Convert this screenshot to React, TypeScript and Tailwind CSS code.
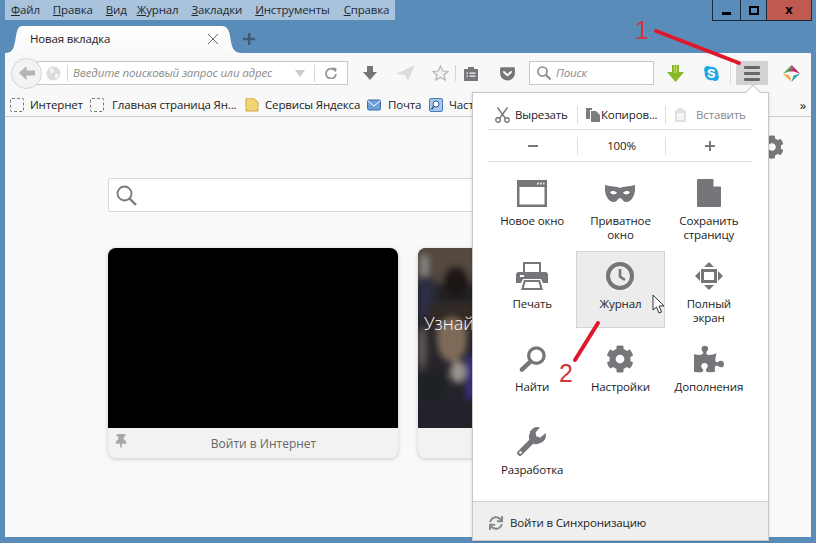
import React from "react";
import { FaPuzzlePiece, FaCog, FaThumbtack, FaGetPocket, FaSkype, FaSync } from "react-icons/fa";

const U = ({ a, b, m }: { a: string; b: string; m: string }) => (
  <span className={"whitespace-nowrap " + m}><span className="underline">{a}</span>{b}</span>
);

const G = "#75767a";

const Dashed = () => <div className="w-[14px] h-[14px] border border-dashed border-[#777] rounded-[2px] shrink-0" />;

function Cell({ icon, label, active }: { icon: React.ReactNode; label: React.ReactNode; active?: boolean }) {
  return (
    <div className={"h-[77px] flex flex-col items-center pt-[8px] border " + (active ? "bg-[#ececec] border-[#d4d4d4]" : "border-transparent")}>
      <div className="h-[32px] w-full flex items-center justify-center shrink-0">{icon}</div>
      <div className="mt-[5px] text-center leading-[14px] text-[#222]">{label}</div>
    </div>
  );
}

export default function App() {
  return (
    <div className="relative w-[816px] h-[543px] overflow-hidden bg-[#5a8cba] flex flex-col font-['Open_Sans','Noto_Sans',sans-serif] text-[11.5px] tracking-[-0.15px] text-[#222]">
      {/* title row */}
      <div className="flex justify-between h-[26px] pl-[5px] pr-[4px] shrink-0">
        <div className="w-[390px] h-[20px] bg-[#a9c3dc] pl-[6px] flex items-center text-[#1f2a33]">
          <U m="mr-[13px]" a="Ф" b="айл" /><U m="mr-[13px]" a="П" b="равка" /><U m="mr-[10px]" a="В" b="ид" /><U m="mr-[13px]" a="Ж" b="урнал" /><U m="mr-[13px]" a="З" b="акладки" /><U m="mr-[14px]" a="И" b="нструменты" /><U m="" a="С" b="правка" />
        </div>
        <div className="flex h-[21px] border border-t-0 border-[#1d2b38] w-[100px]">
          <div className="w-[28px] flex items-center justify-center border-r border-[#1d2b38] pt-[6px]"><div className="w-[9px] h-[3px] bg-black" /></div>
          <div className="w-[26px] flex items-center justify-center border-r border-[#1d2b38]"><div className="w-[10px] h-[9px] border-2 border-black" /></div>
          <div className="flex-1 bg-[#c05a50] flex items-center justify-center font-bold text-[13px] text-black">x</div>
        </div>
      </div>

      {/* tab row */}
      <div className="flex items-end h-[27px] pl-[5px] shrink-0">
        <svg width="17" height="27" viewBox="0 0 17 27" className="shrink-0">
          <path d="M0 27 C8 27 9 22 11 10 C12 3 14 0 17 0 L17 27 Z" fill="#fbfbfb" />
        </svg>
        <div className="w-[200px] h-[27px] bg-gradient-to-b from-white to-[#f8f8f8] flex items-center justify-between pl-[8px] pr-[3px] pb-[2px]">
          <span className="text-[#222]">Новая вкладка</span>
          <svg width="12" height="12" viewBox="0 0 12 12" stroke="#666" strokeWidth="1"><path d="M1 1 L11 11 M11 1 L1 11" /></svg>
        </div>
        <svg width="20" height="27" viewBox="0 0 20 27" className="shrink-0">
          <path d="M20 27 C11 27 10 22 8 10 C7 3 4 0 0 0 L0 27 Z" fill="#fbfbfb" />
        </svg>
        <svg width="14" height="14" viewBox="0 0 14 14" className="mb-[7px]"><path d="M6 1h2.400v4.800H13v2.400H8.400V13H6V8.200H1V5.800h5z" fill="#3f5b74" /></svg>
      </div>

      {/* browser body */}
      <div className="mx-[5px] w-[806px] flex-1 flex flex-col bg-[#f9f9f9] mb-[6px] min-h-0">
        {/* toolbar */}
        <div className="h-[39px] shrink-0 flex items-center bg-[#f8f8f8] pt-px">
          <div className="flex items-center ml-[6px]">
            <div className="w-[31px] h-[31px] rounded-full bg-[#f3f3f3] border border-[#d4d4d4] flex items-center justify-center z-10 shrink-0">
              <svg width="16" height="14" viewBox="0 0 16 14"><path d="M7.500 0 L0 7 L7.500 14 V9.500 H16 V4.500 H7.500Z" fill="#b3b3b3" /></svg>
            </div>
            <div className="w-[311px] h-[24px] -ml-[5px] bg-white border border-[#c8c8c8] flex items-center">
              <svg width="15" height="15" viewBox="0 0 15 15" className="ml-[8px] shrink-0"><circle cx="7.500" cy="7.500" r="7" fill="#dcdcdc" /><path d="M3 3 L7 2 L8 6 L5 8 Z M9 8 L13 8 L11 13 L9 12Z" fill="#f5f5f5" /></svg>
              <div className="w-px h-[17px] bg-[#d8d8d8] ml-[6px]" />
              <span className="ml-[5px] italic text-[#8b8b8b] whitespace-nowrap w-[208px]">Введите поисковый запрос или адрес</span>
              <svg width="10" height="7" viewBox="0 0 10 7" className="ml-[14px]"><path d="M0 0H10L5 7Z" fill="#c9c9c9" /></svg>
              <div className="w-px h-[17px] bg-[#d8d8d8] ml-[9px]" />
              <svg width="12" height="12" viewBox="0 0 12 12" className="ml-[10px]"><path d="M10 3.500 A5 5 0 1 0 11 7" fill="none" stroke="#969696" strokeWidth="1.800" /><path d="M7 0.500 L11.500 1 L11 5.500Z" fill="#969696" /></svg>
            </div>
          </div>
          <svg width="14" height="14" viewBox="0 0 14 14" className="ml-[15px]"><path d="M4 0H10V6H14L7 14L0 6H4Z" fill={G} /></svg>
          <svg width="19" height="16" viewBox="0 0 19 16" className="ml-[19px]"><path d="M0 9 L19 0 L12 16 L9 10Z" fill="#dcdcdc" /></svg>
          <svg width="17" height="16" viewBox="0 0 17 16" className="ml-[17px]"><path d="M8.500 1 L10.700 6 L16 6.500 L12 10 L13.200 15 L8.500 12.400 L3.800 15 L5 10 L1 6.500 L6.300 6Z" fill="#f2f2f2" stroke="#b5b5b5" strokeWidth="1.200" /></svg>
          <div className="w-px h-[16px] bg-[#d4d4d4] ml-[6px]" />
          <svg width="14" height="15" viewBox="0 0 14 15" className="ml-[8px]"><path d="M0 3H4V1H10V3H14V15H0Z" fill={G} /><path d="M2.500 6.500h1.500v1.300H2.500zM5.500 6.500h6v1.300h-6zM2.500 9.500h1.500v1.300H2.500zM5.500 9.500h6v1.300h-6z" fill="#f8f8f8" /></svg>
          <FaGetPocket size={17} color={G} className="ml-[21px]" />
          <div className="ml-[13px] w-[125px] h-[24px] bg-white border border-[#c8c8c8] flex items-center pl-[7px]">
            <svg width="14" height="14" viewBox="0 0 14 14" fill="none" stroke="#888" strokeWidth="1.600"><circle cx="5.500" cy="5.500" r="4.500" /><path d="M9 9 L13.500 13.500" strokeWidth="2" /></svg>
            <span className="ml-[5px] italic text-[#8b8b8b]">Поиск</span>
          </div>
          <svg width="17" height="17" viewBox="0 0 17 17" className="ml-[13px]"><path d="M5 0H12V7H17L8.500 17L0 7H5Z" fill="#86b825" /><path d="M7 0H8V8H7ZM9 0H10V8H9Z" fill="#c5e070" /></svg>
          <FaSkype size={17} color="#1fa8e4" className="ml-[19px]" />
          <div className="w-px h-[24px] bg-[#dcdcdc] ml-[10px]" />
          <div className="ml-[5px] w-[32px] h-[24px] bg-[#d2d2d2] flex flex-col items-center justify-center gap-[3px]">
            <div className="w-[16px] h-[3px] bg-[#666a6e] rounded-[1px]" />
            <div className="w-[16px] h-[3px] bg-[#666a6e] rounded-[1px]" />
            <div className="w-[16px] h-[3px] bg-[#666a6e] rounded-[1px]" />
          </div>
          <svg width="17" height="17" viewBox="0 0 17 17" className="ml-[15px]">
            <path d="M8.500 0 L0 8.500 L6.500 6.500Z" fill="#5aa85a" />
            <path d="M8.500 0 L17 8.500 L10.500 6.500Z" fill="#b8285c" />
            <path d="M8.500 0 L6.500 6.500 L8.500 6.500Z" fill="#7a2f4a" />
            <path d="M8.500 0 L10.500 6.500 L8.500 6.500Z" fill="#b8285c" />
            <path d="M0 8.500 L8.500 17 L6.500 10.500Z" fill="#f4a62a" />
            <path d="M17 8.500 L8.500 17 L10.500 10.500Z" fill="#2fa3a8" />
          </svg>
        </div>
        {/* bookmarks */}
        <div className="h-[25px] shrink-0 flex items-center bg-[#f8f8f8] border-b border-[#d0d0d0] pl-[5px] pr-[4px] text-[#222] whitespace-nowrap pt-[2px]">
          <Dashed />
          <span className="ml-[6px] w-[60px]">Интернет</span>
          <Dashed />
          <span className="ml-[8px] w-[133px]">Главная страница Ян...</span>
          <svg width="14" height="14" viewBox="0 0 14 14"><path d="M1 0H8L13 4V13H1Z" fill="#f2d477" stroke="#c9a93f" /></svg>
          <span className="ml-[6px] w-[102px]">Сервисы Яндекса</span>
          <svg width="14" height="14" viewBox="0 0 14 14"><rect x="0.500" y="2" width="13" height="10" rx="1.500" fill="#6e9fd8" stroke="#3a6ea8" /><path d="M1 3 L7 8 L13 3" fill="none" stroke="#fff" /></svg>
          <span className="ml-[7px] w-[41px]">Почта</span>
          <svg width="14" height="14" viewBox="0 0 14 14"><rect x="0.500" y="0.500" width="13" height="13" rx="1.500" fill="#a9c8ea" stroke="#4a7db8" /><circle cx="7" cy="6" r="3" fill="#fff" stroke="#2d5f9a" /><path d="M5 8 L2.500 11.500" stroke="#2d5f9a" strokeWidth="1.500" /></svg>
          <span className="ml-[6px]">Часто читаемое</span>
          <span className="ml-auto text-[13px] leading-none pr-[1px]">»</span>
        </div>
        {/* new tab page */}
        <div className="flex-1 min-h-0 overflow-hidden pl-[103px] pt-[61px] flex flex-col">
          <div className="w-[560px] h-[34px] bg-white border border-[#d8d8d8] rounded-[2px] flex items-center pl-[7px] shrink-0">
            <svg width="21" height="21" viewBox="0 0 21 21" fill="none" stroke="#7a7a7a" strokeWidth="1.800"><circle cx="8.500" cy="8.500" r="7" /><path d="M13.500 13.500 L20 20" strokeWidth="2.400" /></svg>
          </div>
          <div className="flex gap-[20px] mt-[36px]">
            <div className="w-[290px] h-[210px] rounded-[8px] bg-[#f2f2f2] shadow-[0_1px_4px_rgba(0,0,0,0.2)] overflow-hidden flex flex-col shrink-0">
              <div className="h-[180px] bg-black shrink-0" />
              <div className="flex-1 flex items-center justify-center relative text-[12px] tracking-normal text-[#666] pl-[21px] pt-[1px]">
                <FaThumbtack size={14} color="#a8a8a8" className="absolute left-[6px] top-[6px]" />
                Войти в Интернет
              </div>
            </div>
            <div className="w-[290px] h-[210px] rounded-[8px] bg-[#f2f2f2] shadow-[0_1px_4px_rgba(0,0,0,0.2)] overflow-hidden flex flex-col shrink-0">
              <div className="h-[180px] bg-[#26242a] shrink-0 relative overflow-hidden">
                <svg width="60" height="180" viewBox="0 0 60 180" className="absolute left-0 top-0">
                  <defs><filter id="bl"><feGaussianBlur stdDeviation="3" /></filter></defs>
                  <g filter="url(#bl)">
                    <rect x="-5" y="-5" width="70" height="40" fill="#544840" />
                    <rect x="3" y="8" width="7" height="22" fill="#8a8682" />
                    <rect x="0" y="28" width="16" height="40" fill="#2c2e42" />
                    <ellipse cx="38" cy="35" rx="13" ry="17" fill="#1f1816" />
                    <rect x="10" y="55" width="50" height="30" fill="#332a27" />
                    <ellipse cx="34" cy="92" rx="15" ry="22" fill="#7f6a58" />
                    <ellipse cx="4" cy="100" rx="5" ry="22" fill="#5c5654" />
                    <rect x="0" y="125" width="28" height="50" fill="#1f2028" />
                    <rect x="48" y="108" width="14" height="42" fill="#3a2f80" />
                    <ellipse cx="40" cy="124" rx="8" ry="11" fill="#9a948c" />
                    <rect x="-5" y="152" width="70" height="36" fill="#20222a" />
                  </g>
                </svg>
                <span className="absolute left-[6px] top-[62px] text-[18px] tracking-normal text-white font-light">Узнайте</span>
              </div>
            </div>
          </div>
        </div>
      </div>

      {/* gear behind panel */}
      <FaCog size={24} color="#777" className="absolute left-[760px] top-[135px]" />

      {/* hamburger panel */}
      <div className="absolute left-[472px] top-[92px] w-[297px] h-[449px] bg-white border border-[#c8c8c8] flex flex-col shadow-[0_1px_3px_rgba(0,0,0,0.15)]">
        <div className="absolute -top-[6px] left-[274px] w-[12px] h-[12px] bg-white border-l border-t border-[#c8c8c8] rotate-45" />
        <div className="mx-[15px] mt-[7px] h-[30px] flex items-center border-b border-[#e2e2e2] relative">
          <div className="w-[89px] flex items-center pl-[7px] gap-[5px]">
            <svg width="15" height="16" viewBox="0 0 15 16" fill="none" stroke="#777" strokeWidth="1.400">
              <path d="M12.500 0.500 L4.500 11.500 M2.500 0.500 L10.500 11.500" />
              <circle cx="3" cy="13" r="2.200" /><circle cx="12" cy="13" r="2.200" />
            </svg>
            <span>Вырезать</span>
          </div>
          <div className="w-px h-[18px] bg-[#ddd]" />
          <div className="w-[87px] flex items-center pl-[8px] gap-[1px] whitespace-nowrap">
            <svg width="14" height="14" viewBox="0 0 14 14" fill="#7d7d7d" className="shrink-0"><path d="M0 0H6V2H4V11H0Z" /><path d="M5 3H10L14 7V14H5Z" /></svg>
            <span>Копиров...</span>
          </div>
          <div className="w-px h-[18px] bg-[#ddd]" />
          <div className="flex-1 flex items-center pl-[9px] gap-[10px] text-[#888]">
            <svg width="11" height="14" viewBox="0 0 11 14" fill="#e0e0e0"><path d="M0 2H3V0H8V2H11V14H0Z" /><path d="M2 5H9V12H2Z" fill="#f6f6f6" /></svg>
            <span>Вставить</span>
          </div>
        </div>
        <div className="mx-[15px] h-[32px] flex items-center border-b border-[#e2e2e2]">
          <div className="w-[89px] flex justify-center"><div className="w-[10px] h-[2px] bg-[#777]" /></div>
          <div className="w-px h-[18px] bg-[#ddd]" />
          <div className="w-[87px] text-center">100%</div>
          <div className="w-px h-[18px] bg-[#ddd]" />
          <div className="flex-1 flex justify-center">
            <svg width="10" height="10" viewBox="0 0 10 10"><path d="M4 0h2v4h4v2H6v4H4V6H0V4h4z" fill="#777" /></svg>
          </div>
        </div>
        <div className="mx-[15px] mt-[6px] grid grid-cols-3 gap-y-[6px] flex-1 content-start">
          <Cell label="Новое окно" icon={
            <svg width="30" height="27" viewBox="0 0 30 27"><path fillRule="evenodd" d="M0 0H30V27H0ZM2.500 7V24.500H27.500V7Z" fill={G} /><path d="M20 2.500h2v2h-2zM23 2.500h2v2h-2zM26 2.500h1.500v2h-1.500z" fill="#ddd" /></svg>
          } />
          <Cell label={<>Приватное<br />окно</>} icon={
            <svg width="30" height="20" viewBox="0 0 30 20"><path fillRule="evenodd" d="M0 2 C6 4 12 3 15 5 C18 3 24 4 30 2 C31 11 27 19 21 19 C18 19 17 15 15 15 C13 15 12 19 9 19 C3 19 -1 11 0 2Z M5 9.500 C7 7 11 8 12 10 C10 12 7 12 5 9.500Z M18 10 C19 8 23 7 25 9.500 C23 12 20 12 18 10Z" fill={G} /></svg>
          } />
          <Cell label={<>Сохранить<br />страницу</>} icon={
            <svg width="24" height="28" viewBox="0 0 24 28"><path d="M1 0H16L24 8V27a1 1 0 0 1-1 1H1a1 1 0 0 1-1-1V1a1 1 0 0 1 1-1Z" fill={G} /><path d="M16.500 0 L24 7.500 H16.500Z" fill="#fff" /></svg>
          } />
          <Cell label="Печать" icon={
            <svg width="32" height="28" viewBox="0 0 32 28"><path fillRule="evenodd" d="M7 0H25V10H23V2H9V10H7Z" fill={G} /><path d="M3 10H29A3 3 0 0 1 32 13V21H27L25 17H7L5 21H0V13A3 3 0 0 1 3 10Z" fill={G} /><path d="M4 13h4v2H4z" fill="#fff" /><path fillRule="evenodd" d="M8 18H24L27 28H5ZM9.500 20L7.800 26H24.200L22.500 20Z" fill={G} /></svg>
          } />
          <Cell active label="Журнал" icon={
            <svg width="28" height="28" viewBox="0 0 28 28" fill="none" stroke={G}><circle cx="14" cy="14" r="12" strokeWidth="4" /><path d="M14 7V14.500L19 18" strokeWidth="2.600" /></svg>
          } />
          <Cell label={<>Полный<br />экран</>} icon={
            <svg width="28" height="28" viewBox="0 0 28 28" fill={G}><path d="M14 0L19 5H9ZM14 28L9 23H19ZM0 14L5 9V19ZM28 14L23 19V9Z" /><path fillRule="evenodd" d="M6 7H22V21H6ZM9 10V18H19V10Z" /></svg>
          } />
          <Cell label="Найти" icon={
            <svg width="27" height="28" viewBox="0 0 28 28" fill="none" stroke={G}><circle cx="18" cy="10.500" r="8" strokeWidth="3.400" /><path d="M11.500 17 L3 25" strokeWidth="4.600" strokeLinecap="round" /></svg>
          } />
          <Cell label="Настройки" icon={<FaCog size={28} color={G} />} />
          <Cell label="Дополнения" icon={<FaPuzzlePiece size={30} color={G} />} />
          <Cell label="Разработка" icon={
            <svg width="30" height="30" viewBox="0 0 30 30" className="-mt-[2px]">
              <path d="M3 27 L17 13" stroke={G} strokeWidth="5.500" strokeLinecap="round" />
              <path d="M17 18 A7.500 7.500 0 0 1 12.500 8 A8 8 0 0 1 23 1.500 L18.500 6.500 L19.500 10.500 L23.500 11.500 L28.500 7 A8 8 0 0 1 22 17.500 A7.500 7.500 0 0 1 17 18Z" fill={G} />
              <circle cx="3.500" cy="26.500" r="1.300" fill="#fff" />
            </svg>
          } />
        </div>
        <div className="h-[39px] bg-[#efefef] border-t border-[#d0d0d0] flex items-center pl-[16px] pt-[3px] shrink-0">
          <FaSync size={14} color="#888" />
          <span className="ml-[7px]">Войти в Синхронизацию</span>
        </div>
      </div>

      {/* cursor */}
      <svg width="14" height="21" viewBox="0 0 14 21" className="absolute left-[652px] top-[294px]"><path d="M1 1 L1 16 L4.500 13 L7 19 L9.500 18 L7 12 L12 12Z" fill="#fff" stroke="#333" /></svg>

      {/* annotations */}
      <svg width="816" height="543" className="absolute left-0 top-0 pointer-events-none">
        <path d="M656 31 L739 63" stroke="#e0182d" strokeWidth="4" strokeLinecap="round" />
        <path d="M598 323 L575 360" stroke="#e0182d" strokeWidth="4" strokeLinecap="round" />
      </svg>
      <span className="absolute left-[635px] top-[15px] text-[25px] tracking-normal leading-[30px] text-[#d4353f] font-['Liberation_Sans']">1</span>
      <span className="absolute left-[559px] top-[358px] text-[25px] tracking-normal leading-[30px] text-[#d4353f] font-['Liberation_Sans']">2</span>
    </div>
  );
}
